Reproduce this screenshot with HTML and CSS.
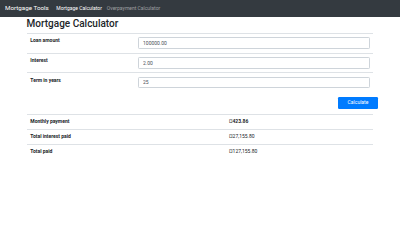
FILE: index.html
```html
<!DOCTYPE html>
<html lang="en">
<head>
<meta charset="utf-8">
<title>Mortgage Calculator</title>
<link rel="stylesheet" href="styles.css">
</head>
<body>
<nav class="navbar">
  <span class="brand">Mortgage Tools</span>
  <ul class="nav">
    <li><a class="nav-link active" href="#">Mortgage Calculator</a></li>
    <li><a class="nav-link" href="#">Overpayment Calculator</a></li>
  </ul>
</nav>
<main class="container">
  <h2 class="title">Mortgage Calculator</h2>
  <table class="table form-table">
    <tr>
      <th class="label-cell">Loan amount</th>
      <td><input class="form-control" type="text" value="100000.00"></td>
    </tr>
    <tr>
      <th class="label-cell">Interest</th>
      <td><input class="form-control" type="text" value="2.00"></td>
    </tr>
    <tr>
      <th class="label-cell">Term in years</th>
      <td><input class="form-control" type="text" value="25"></td>
    </tr>
  </table>
  <div class="actions">
    <button class="btn" type="button">Calculate</button>
  </div>
  <table class="table results">
    <tr>
      <th class="result-label">Monthly payment</th>
      <td class="strong">¤423.86</td>
    </tr>
    <tr>
      <th class="result-label">Total interest paid</th>
      <td>¤27,155.80</td>
    </tr>
    <tr>
      <th class="result-label">Total paid</th>
      <td>¤127,155.80</td>
    </tr>
  </table>
</main>
</body>
</html>
```

FILE: styles.css
```css
* {
  box-sizing: border-box;
}

body {
  margin: 0;
  font-family: Roboto, "Helvetica Neue", Arial, "Noto Sans", sans-serif;
  font-size: 5px;
  line-height: 7.5px;
  color: #212529;
  background: #fff;
}

.navbar {
  display: flex;
  align-items: center;
  background: #343a40;
  padding: 2.1px 5px;
}

.brand {
  color: #fff;
  font-size: 6.25px;
  line-height: 9.375px;
  padding: 1.5625px 0;
  margin-right: 5px;
}

.nav {
  display: flex;
  list-style: none;
  margin: 0;
  padding: 0;
}

.nav-link {
  display: block;
  padding: 2.5px;
  color: rgba(255, 255, 255, 0.5);
  text-decoration: none;
}

.nav-link.active {
  color: #fff;
}

.container {
  max-width: 356.25px;
  margin: 0 auto;
  padding: 0 4.6875px;
}

.title {
  font-size: 10px;
  font-weight: 500;
  line-height: 12px;
  margin: 1.8px 0 2.5px;
}

.table {
  width: 100%;
  border-collapse: collapse;
}

.table th,
.table td {
  border-top: 1px solid #dee2e6;
  vertical-align: top;
  text-align: left;
}

.table th {
  font-weight: 700;
}

.form-table {
  margin-bottom: 5.2px;
}

.form-table th,
.form-table td {
  padding: 3.36px 3.75px;
}

.results th,
.results td {
  padding: 3.25px 3.75px;
}

.label-cell {
  width: 108px;
}

.result-label {
  width: 198.7px;
}

.form-control {
  display: block;
  width: 100%;
  height: 11.875px;
  padding: 1.875px 3.75px;
  font-family: inherit;
  font-size: 5px;
  line-height: 7.5px;
  color: #495057;
  background: #fff;
  border: 1px solid #ced4da;
  border-radius: 1.25px;
}

.actions {
  display: flex;
  justify-content: flex-end;
  margin: 0 -4.6875px 5.4px 0;
}

.btn {
  width: 40.3px;
  height: 11.875px;
  padding: 0 3.75px;
  font-family: inherit;
  font-size: 5px;
  line-height: 7.5px;
  color: #fff;
  background: #007bff;
  border: none;
  border-radius: 1.25px;
}

.strong {
  font-weight: 700;
}
```
